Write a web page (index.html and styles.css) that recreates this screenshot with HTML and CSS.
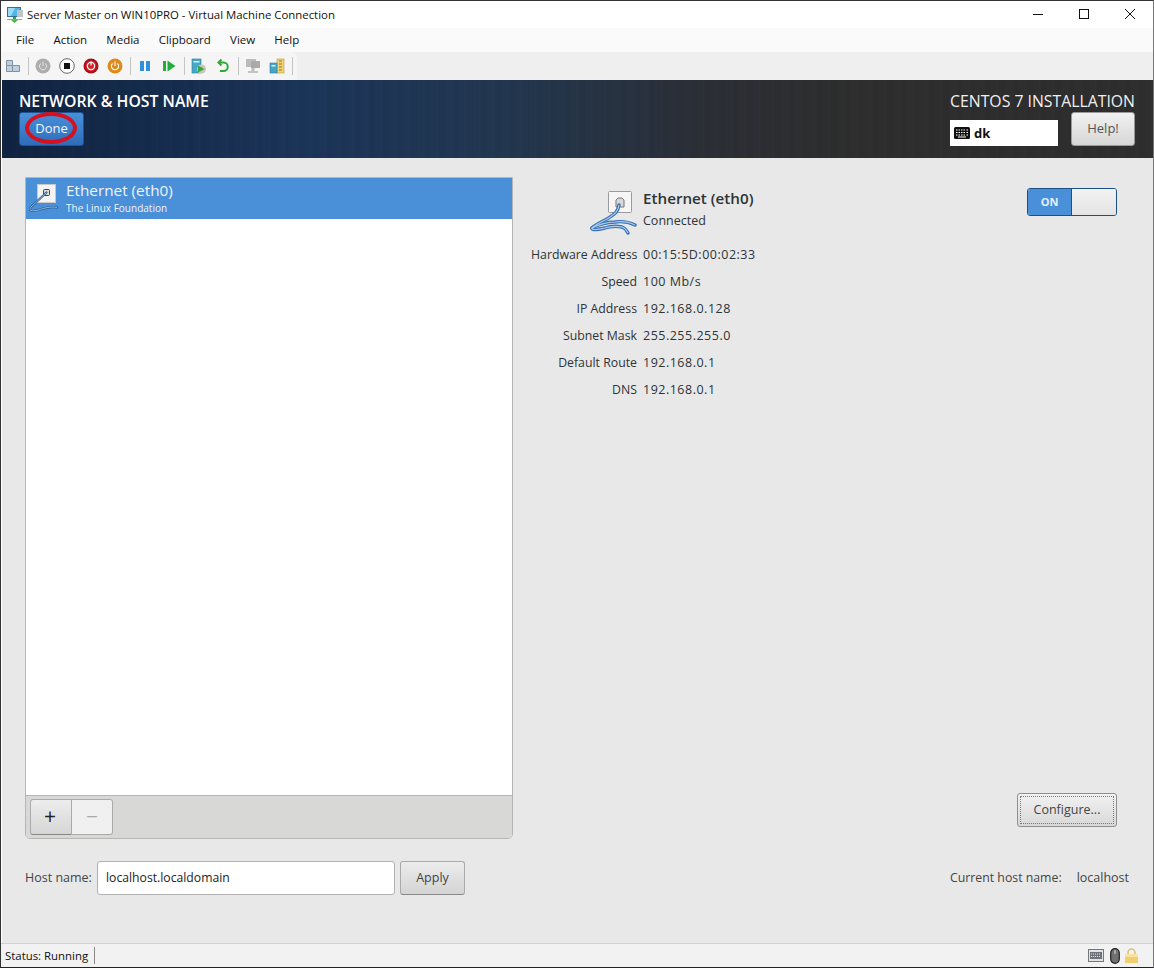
FILE: index.html
```html
<!DOCTYPE html>
<html lang="en">
<head>
<meta charset="utf-8">
<title>Server Master on WIN10PRO - Virtual Machine Connection</title>
<link rel="stylesheet" href="styles.css">
</head>
<body>
<div class="window">
  <div class="titlebar">
    <svg class="app-icon" width="16" height="17" viewBox="0 0 16 17">
      <rect x="0" y="1" width="14" height="10" fill="#2f6f9f"/>
      <rect x="1" y="2" width="12" height="8" fill="#4fb4e6"/>
      <path d="M1 2h7l-4 8H1z" fill="#9adcf5"/>
      <rect x="6" y="11" width="3" height="3" fill="#3f9a3f"/>
      <path d="M4 14h7l-3.500 3z" fill="#4caf4c"/>
      <rect x="0" y="13" width="15" height="1" fill="#a0a0a0"/>
      <rect x="10" y="4" width="6" height="7" fill="#bfc4c8"/>
    </svg>
    <span class="title-text">Server Master on WIN10PRO - Virtual Machine Connection</span>
    <div class="win-controls">
      <svg width="10" height="10" viewBox="0 0 10 10"><path d="M0 5.500h10" stroke="#111" fill="none"/></svg>
      <svg width="10" height="10" viewBox="0 0 10 10"><rect x=".5" y=".5" width="9" height="9" stroke="#111" fill="none"/></svg>
      <svg width="10" height="10" viewBox="0 0 10 10"><path d="M0 0l10 10M10 0L0 10" stroke="#111" fill="none"/></svg>
    </div>
  </div>
  <nav class="menubar">
    <span>File</span><span>Action</span><span>Media</span><span>Clipboard</span><span>View</span><span>Help</span>
  </nav>
  <div class="toolbar">
    <div class="tools">
      <svg class="tool" viewBox="0 0 16 16"><path d="M1.500 2.500h6v5h-6zM1.500 7.500h6v6h-6zM7.500 7.500h7v6h-7z" fill="#bcd0e4" stroke="#84909c"/></svg>
      <i class="sep"></i>
      <svg class="tool" viewBox="0 0 16 16"><circle cx="8" cy="8" r="7.500" fill="#adadad"/><path d="M5.600 5.500a3.600 3.600 0 1 0 4.800 0M8 3.500v4.500" stroke="#e4e4e4" fill="none"/></svg>
      <svg class="tool" viewBox="0 0 16 16"><circle cx="8" cy="8" r="7.300" fill="#fff" stroke="#666"/><rect x="5" y="5" width="6" height="6" fill="#111"/></svg>
      <svg class="tool" viewBox="0 0 16 16"><circle cx="8" cy="8" r="7.500" fill="#a80f18"/><circle cx="8" cy="8" r="5.500" fill="#d3202a"/><circle cx="8" cy="8" r="3.600" fill="none" stroke="#fff" stroke-width="1.200"/><path d="M8 3.500v4" stroke="#fff" stroke-width="1.200"/></svg>
      <svg class="tool" viewBox="0 0 16 16"><circle cx="8" cy="8" r="7.500" fill="#de8a1c"/><path d="M5.600 5.500a3.600 3.600 0 1 0 4.800 0M8 3.500v4.500" stroke="#fff" fill="none" stroke-width="1.100"/></svg>
      <i class="sep"></i>
      <svg class="tool" viewBox="0 0 16 16"><path d="M3 3h4v10H3zM9 3h4v10H9z" fill="#2f8fdc"/></svg>
      <svg class="tool" viewBox="0 0 16 16"><path d="M2 3h3v10H2z" fill="#1fae3a"/><path d="M6.500 2.500l8 5.500-8 5.500z" fill="#1fae3a"/></svg>
      <i class="sep"></i>
      <svg class="tool" viewBox="0 0 16 16"><rect x="1" y="1" width="9" height="14" fill="#49a7c9" stroke="#2a7a99" stroke-width=".6"/><rect x="2.500" y="3" width="6" height="1.500" fill="#d8f0fa"/><circle cx="10.500" cy="11" r="4.500" fill="#c9c7b8"/><path d="M7 7.500l6.500 3.500L7 14.500z" fill="#35a83f"/></svg>
      <svg class="tool" viewBox="0 0 16 16"><path d="M6.500 1.500l-3 3 3 3" fill="none" stroke="#2ea836" stroke-width="2"/><path d="M4 4.500h4.500a4 4 0 0 1 0 8.500H5" fill="none" stroke="#2ea836" stroke-width="2"/></svg>
      <i class="sep"></i>
      <svg class="tool" viewBox="0 0 16 16"><rect x="1" y="1" width="10" height="8" fill="#bbb"/><rect x="6" y="3" width="9" height="7" fill="#aaa"/><rect x="6.500" y="10" width="3" height="3" fill="#bbb"/><rect x="3" y="13" width="10" height="2" fill="#c4c4c4"/></svg>
      <svg class="tool" viewBox="0 0 16 16"><rect x="8" y="1" width="7" height="14" fill="#f1d26e" stroke="#b89b3a" stroke-width=".6"/><path d="M10 3h3M10 6h3M10 9h3M10 12h3" stroke="#8a7a40"/><rect x="1" y="5" width="7" height="10" fill="#46a6c8" stroke="#2a7a99" stroke-width=".6"/><rect x="2.500" y="7" width="4" height="1.500" fill="#d8f0fa"/></svg>
      <i class="sep"></i>
    </div>
  </div>

  <header class="anaconda-header">
    <div class="header-left">
      <h1>NETWORK &amp; HOST NAME</h1>
      <div class="done-wrap">
        <button class="done">Done</button>
        <span class="mark"></span>
      </div>
    </div>
    <div class="header-right">
      <h2>CENTOS 7 INSTALLATION</h2>
      <div class="header-controls">
        <div class="layout-box">
          <svg width="16" height="12" viewBox="0 0 16 12"><rect width="16" height="12" rx="1.500" fill="#111"/><path d="M2 3h1.500M4.500 3H6M7 3h1.500M9.500 3H11M12.500 3H14M2 5.500h1.500M4.500 5.500H6M7 5.500h1.500M9.500 5.500H11M12.500 5.500H14M2 8h1.500M4.500 8H6M7 8h1.500M9.500 8H11M12.500 8H14M4 10h8" stroke="#fff" stroke-width="1"/></svg>
          <b>dk</b>
        </div>
        <button class="help">Help!</button>
      </div>
    </div>
  </header>

  <main class="content">
    <div class="top">
      <section class="device-panel">
        <div class="device-list">
          <div class="device-row">
            <svg class="row-icon" width="32" height="32" viewBox="0 0 32 32">
              <rect x="9.500" y="1.500" width="18" height="18" fill="#f4f4f4" stroke="#c8c8c8"/>
              <rect x="15.500" y="6.500" width="6" height="6" rx="1" fill="#ddd" stroke="#3c4650"/>
              <path d="M18.500 9.500L3 24C0 28 4 28.500 10 27 16 25.500 22 23 29 24.500" fill="none" stroke="#2b5c94" stroke-width="2.200" stroke-linecap="round"/>
              <path d="M18.500 9.500L3 24C0 28 4 28.500 10 27 16 25.500 22 23 29 24.500" fill="none" stroke="#9cc0e6" stroke-width=".9"/>
            </svg>
            <div class="row-text">
              <div class="row-name">Ethernet (eth0)</div>
              <div class="row-vendor">The Linux Foundation</div>
            </div>
          </div>
        </div>
        <div class="device-actions">
          <div class="btn-group">
            <button class="add">+</button>
            <button class="remove">−</button>
          </div>
        </div>
      </section>

      <section class="details">
        <div class="details-head">
          <div class="details-summary">
            <div class="icon-col">
              <svg width="48" height="46" viewBox="0 0 48 46">
                <rect x="19.500" y="2.500" width="23" height="21" rx="1" fill="#f6f6f6" stroke="#9a9a9a"/>
                <path d="M29 9h4l2 2v7h-8v-7z" fill="#d8d8d8" stroke="#777"/>
                <g fill="none" stroke="#3a72b4" stroke-width="3.400" stroke-linecap="round">
                  <path d="M30 16C29 24 24 26 18 30 12 33 6 36 3 39 2 41 8 41 16 39 22 37 28 37 33 38 36 39 38 42 39 44"/>
                  <path d="M3 39C8 36 18 33 26 33 33 32 40 33 46 36"/>
                </g>
                <g fill="none" stroke="#a9cdee" stroke-width="1.200">
                  <path d="M30 16C29 24 24 26 18 30 12 33 6 36 3 39 2 41 8 41 16 39 22 37 28 37 33 38 36 39 38 42 39 44"/>
                  <path d="M3 39C8 36 18 33 26 33 33 32 40 33 46 36"/>
                </g>
              </svg>
            </div>
            <div class="summary-text">
              <div class="dev-name">Ethernet (eth0)</div>
              <div class="dev-state">Connected</div>
            </div>
          </div>
          <div class="switch"><span class="switch-on">ON</span><span class="switch-thumb"></span></div>
        </div>
        <dl class="props">
          <dt>Hardware Address</dt><dd>00:15:5D:00:02:33</dd>
          <dt>Speed</dt><dd>100 Mb/s</dd>
          <dt>IP Address</dt><dd>192.168.0.128</dd>
          <dt>Subnet Mask</dt><dd>255.255.255.0</dd>
          <dt>Default Route</dt><dd>192.168.0.1</dd>
          <dt>DNS</dt><dd>192.168.0.1</dd>
        </dl>
        <div class="config-row"><button class="configure"><span>Configure...</span></button></div>
      </section>
    </div>

    <div class="host-row">
      <label class="host-label">Host name:</label>
      <div class="host-input">localhost.localdomain</div>
      <button class="apply">Apply</button>
      <div class="current-host"><span class="current-label">Current host name:</span><span>localhost</span></div>
    </div>
  </main>

  <footer class="statusbar">
    <span class="status-text">Status: Running</span>
    <div class="tray">
      <svg class="tray-key" width="16" height="13" viewBox="0 0 16 13"><rect x=".5" y=".5" width="15" height="12" fill="#dfe3e6" stroke="#777"/><rect x="2" y="3" width="12" height="7" fill="#6d7378"/><path d="M3 5h10M3 7.500h10" stroke="#dfe3e6" stroke-dasharray="1 1"/></svg>
      <svg width="10" height="16" viewBox="0 0 10 16"><rect x=".700" y=".700" width="8.600" height="14.600" rx="4.300" fill="#6f6f6f" stroke="#222" stroke-width="1.200"/><path d="M5 2v4" stroke="#ddd"/></svg>
      <svg width="13" height="15" viewBox="0 0 13 15"><path d="M3 7V4.500a3.500 3.500 0 0 1 7 0V7" fill="none" stroke="#d8c07a" stroke-width="1.500"/><rect x="0" y="6" width="13" height="9" fill="#f2cf6e"/><rect x="0" y="6" width="13" height="3" fill="#f8e3a0"/></svg>
    </div>
  </footer>
</div>
</body>
</html>
```
FILE: styles.css
```css
* { box-sizing: border-box; }
html, body { margin: 0; padding: 0; }
body { background: #fff; font-family: "Open Sans", "Noto Sans", sans-serif; }
button { font-family: inherit; margin: 0; cursor: default; }

.window {
  width: 1154px;
  height: 968px;
  display: flex;
  flex-direction: column;
  overflow: hidden;
  border-top: 1px solid #333;
  border-bottom: 1px solid #222;
  border-left: 1px solid #333;
  border-right: 1px solid #777;
}

.titlebar {
  height: 27px;
  flex: none;
  display: flex;
  align-items: center;
  background: #fff;
  padding: 0 0 1px 6px;
  color: #111;
}
.app-icon { margin-right: 4px; }
.title-text { font-size: 11.400px; }
.win-controls { margin-left: auto; display: flex; gap: 36px; padding-right: 18px; align-items: center; }

.menubar {
  height: 24px;
  flex: none;
  background: #fafafa;
  display: flex;
  align-items: center;
  gap: 19.200px;
  padding: 0 0 1px 15px;
  font-size: 11.500px;
  color: #111;
}

.toolbar {
  height: 28px;
  flex: none;
  background: #efefef;
  display: flex;
}
.tools {
  width: 296px;
  background: #f5f5f5;
  border-top-right-radius: 6px;
  display: flex;
  align-items: center;
  padding: 0 0 0 4px;
  gap: 8px;
}
.tool { width: 16px; height: 16px; flex: none; }
.sep { width: 1px; height: 18px; background: #c4c4c4; flex: none; margin: 0 -1.500px; }

.anaconda-header {
  height: 78px;
  flex: none;
  margin-left: 1px;
  color: #fff;
  padding: 13px 18px 0 17px;
  display: flex;
  justify-content: space-between;
  background:
    repeating-linear-gradient(90deg, rgba(255,255,255,.007) 0 3px, rgba(0,0,0,.012) 3px 9px, rgba(255,255,255,.005) 9px 14px),
    linear-gradient(90deg, #0f2240 0, #1a3458 300px, #21364f 500px, #2a2e35 700px, #2d2d2d 850px);
}
.header-left h1 { margin: 0; font-size: 15.800px; line-height: 17px; font-weight: 600; }
.done-wrap { position: relative; margin-top: 2px; width: 65px; }
.done {
  display: block;
  width: 65px;
  height: 34px;
  border: 1px solid #1c5596;
  border-radius: 3px;
  background: linear-gradient(#4a90d9, #2d6dbb);
  color: #f2f6fb;
  font-size: 13px;
  padding: 0 0 2px;
}
.mark {
  position: absolute;
  left: 6px;
  top: 0;
  width: 52px;
  height: 32px;
  border: 4px solid #d5101f;
  border-radius: 50%;
}
.header-right { display: flex; flex-direction: column; align-items: flex-end; }
.header-right h2 { margin: 0; font-size: 15.800px; line-height: 17px; font-weight: 400; color: #f0f0f0; }
.header-controls { display: flex; align-items: flex-start; gap: 13px; margin-top: 2px; }
.layout-box {
  margin-top: 8px;
  width: 108px;
  height: 26px;
  background: #fff;
  color: #111;
  display: flex;
  align-items: center;
  gap: 4px;
  padding: 0 0 1px 4px;
  font-size: 13px;
}
.help {
  width: 64px;
  height: 34px;
  border: 1px solid #999;
  border-radius: 3px;
  background: linear-gradient(#f2f2f2, #d6d6d6);
  color: #555;
  font-size: 13px;
  padding: 0 0 2px;
}

.content {
  flex: 1;
  min-height: 0;
  background: #e8e8e8;
  margin-left: 1px;
  padding: 19px 24px 0 23px;
  display: flex;
  flex-direction: column;
  color: #2e3436;
  font-size: 13px;
}
.top { display: flex; height: 662px; flex: none; }

.device-panel {
  width: 488px;
  flex: none;
  display: flex;
  flex-direction: column;
  border: 1px solid #b6b6b3;
  border-radius: 0 0 5px 5px;
  background: #fff;
  overflow: hidden;
}
.device-list { flex: 1; }
.device-row {
  height: 41px;
  background: #4a90d9;
  color: #fff;
  display: flex;
  align-items: center;
  padding-left: 2px;
  gap: 6px;
}
.row-icon { flex: none; }
.row-text { color: #eef4fb; margin-top: -1px; }
.row-name { font-size: 15.300px; line-height: 18px; }
.row-vendor { font-size: 10px; line-height: 14px; margin-top: 2px; }
.device-actions {
  height: 43px;
  flex: none;
  background: #d8d8d6;
  border-top: 1px solid #b6b6b3;
  padding: 3px 0 0 4px;
}
.btn-group { display: flex; }
.btn-group button {
  height: 36px;
  border: 1px solid #aaa;
  padding: 0 0 2px;
  font-size: 21px;
  line-height: 1;
}
.add {
  width: 42px;
  border-radius: 3px 0 0 3px;
  background: linear-gradient(#ededed, #d6d6d6);
  color: #222;
  border-bottom-color: #888 !important;
  padding-right: 2px !important;
}
.remove {
  width: 41px;
  border-left: 0 !important;
  border-radius: 0 3px 3px 0;
  background: #f0f0f0;
  color: #aaa;
}

.details {
  flex: 1;
  display: flex;
  flex-direction: column;
  padding: 10px 12px 12px 18px;
}
.details-head { display: flex; justify-content: space-between; align-items: flex-start; height: 52px; }
.details-summary { display: flex; gap: 6px; margin-top: 2px; }
.icon-col { width: 106px; display: flex; justify-content: flex-end; }
.dev-name { font-size: 15.200px; font-weight: 600; line-height: 20px; margin-top: -1px; }
.dev-state { font-size: 12.500px; line-height: 20px; margin-top: 3px; }
.switch {
  width: 90px;
  height: 28px;
  margin-top: 1px;
  border: 1px solid #1c4f86;
  border-radius: 3px;
  display: flex;
  overflow: hidden;
}
.switch-on {
  width: 43px;
  background: #4a90d9;
  color: #e6eff9;
  font-size: 11px;
  font-weight: 700;
  display: flex;
  align-items: center;
  justify-content: center;
  padding-bottom: 1px;
}
.switch-thumb {
  flex: 1;
  background: linear-gradient(#f2f2f2, #e4e4e4);
  border-left: 1px solid #1c4f86;
}

.props {
  margin: 2px 0 0;
  display: grid;
  grid-template-columns: 106px auto;
  column-gap: 6px;
  justify-content: start;
  line-height: 27px;
}
.props dt { text-align: right; white-space: nowrap; font-size: 12.300px; }
.props dd { margin: 0; font-size: 12.500px; letter-spacing: .5px; }

.config-row { margin-top: auto; display: flex; justify-content: flex-end; }
.configure {
  width: 100px;
  height: 34px;
  padding: 2px;
  border: 1px solid #8f8f8f;
  border-radius: 3px;
  background: linear-gradient(#f2f2f2, #d8d8d8);
  color: #444;
  font-size: 12.500px;
}
.configure span {
  display: flex;
  align-items: center;
  justify-content: center;
  height: 100%;
  border: 1px dotted #777;
  padding-bottom: 1px;
}

.host-row {
  flex: none;
  display: flex;
  align-items: center;
  margin-top: 22px;
  height: 34px;
  font-size: 12.500px;
}
.host-label { width: 72px; color: #444; padding-bottom: 1px; }
.host-input {
  width: 298px;
  height: 34px;
  background: #fff;
  border: 1px solid #b2b2b2;
  border-radius: 3px;
  padding: 0 0 1px 8px;
  display: flex;
  align-items: center;
  color: #222;
  font-size: 12.200px;
}
.apply {
  margin-left: 5px;
  width: 65px;
  height: 34px;
  border: 1px solid #aaa;
  border-bottom-color: #888;
  border-radius: 3px;
  background: linear-gradient(#ececec, #d4d4d4);
  color: #444;
  font-size: 12.500px;
  padding: 0 0 1px;
}
.current-host { margin-left: auto; display: flex; gap: 15px; color: #444; padding-bottom: 1px; align-items: baseline; }
.current-label { font-size: 12.300px; }

.statusbar {
  height: 24px;
  flex: none;
  background: #f2f2f2;
  border-top: 1px solid #d2d2d2;
  display: flex;
  align-items: center;
  padding: 0 15px 0 4px;
  font-size: 11.400px;
  color: #111;
}
.status-text { padding-right: 6px; border-right: 1px solid #888; line-height: 17px; }
.tray { margin-left: auto; display: flex; gap: 5px; align-items: center; }
.tray-key { margin-right: 1px; }
```
